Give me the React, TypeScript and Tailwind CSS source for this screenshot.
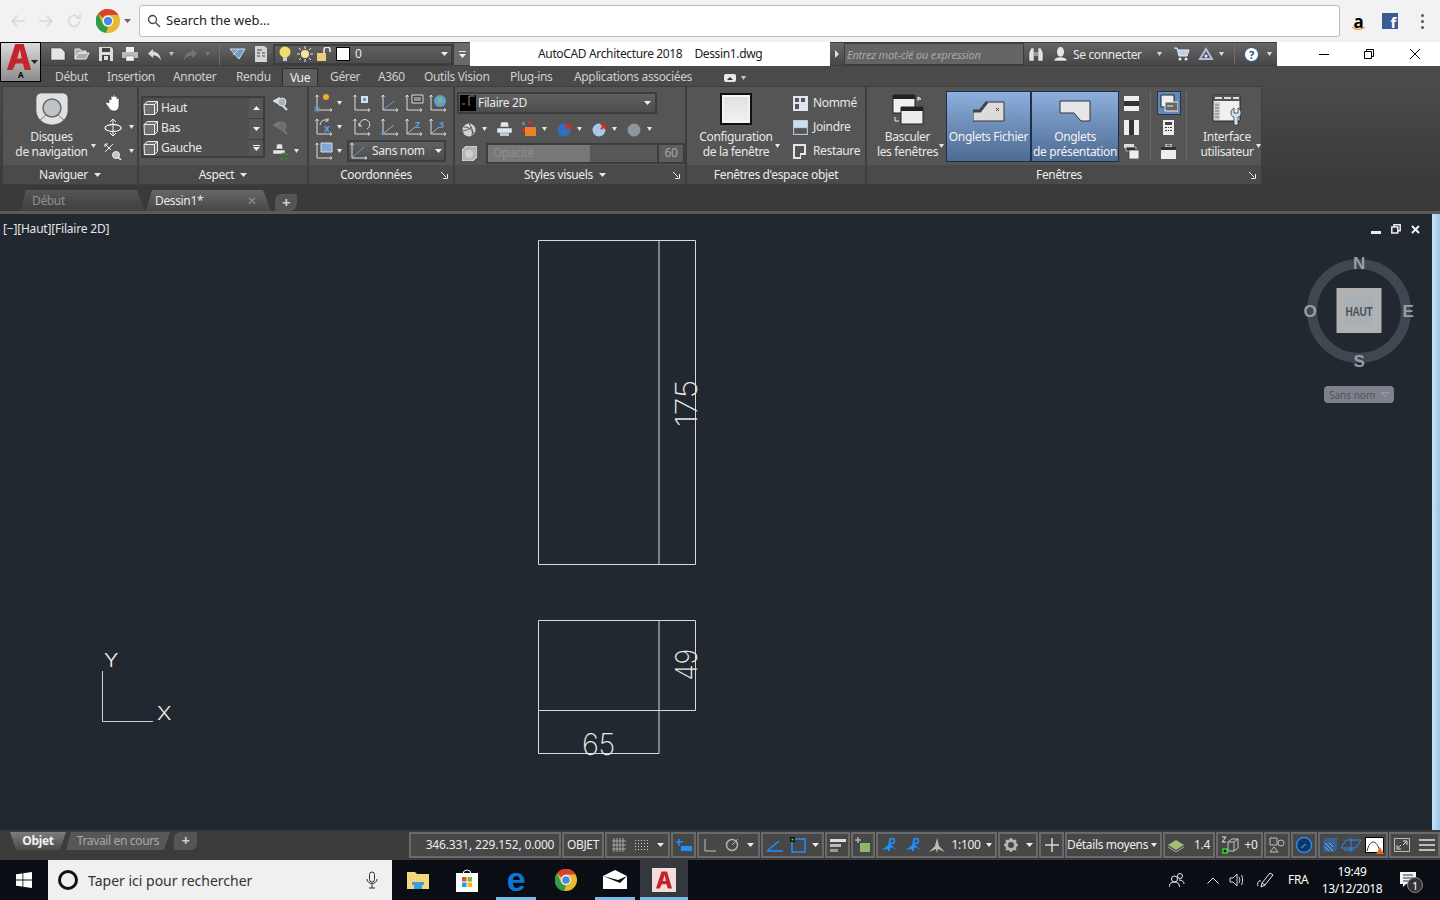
import type { ReactNode } from "react";

const FONT = "font-['Noto_Sans','Liberation_Sans',sans-serif]";

function Caret({ c = "#e6e6e6", w = 7 }: { c?: string; w?: number }) {
  return (
    <svg width={w} height={4} viewBox="0 0 7 4" preserveAspectRatio="none" className="shrink-0">
      <path d="M0 0h7L3.500 4z" fill={c} />
    </svg>
  );
}

function S({ w = 20, h = 20, children }: { w?: number; h?: number; children: ReactNode }) {
  return (
    <svg width={w} height={h} viewBox={`0 0 ${w} ${h}`} className="shrink-0">
      {children}
    </svg>
  );
}

function ChromeLogo({ size = 24 }: { size?: number }) {
  return (
    <svg width={size} height={size} viewBox="0 0 24 24" className="shrink-0">
      <circle cx="12" cy="12" r="12" fill="#e8b92c" />
      <path d="M12 0a12 12 0 0 1 10.400 6H12a6 6 0 0 0-5.200 3L2.200 4.600A12 12 0 0 1 12 0z" fill="#d8412f" />
      <path d="M2.200 4.600 6.800 15a6 6 0 0 0 5.200 3l-2 6A12 12 0 0 1 2.200 4.600z" fill="#2e9c4a" />
      <circle cx="12" cy="12" r="5.400" fill="#fff" />
      <circle cx="12" cy="12" r="4.200" fill="#4a87e8" />
    </svg>
  );
}

function AcadLogo() {
  return (
    <div className="flex h-[40px] w-[41px] flex-col items-center border border-black bg-gradient-to-b from-[#dcdcdc] to-[#8c8c8c]">
      <div className="relative flex h-[27px] w-full justify-start pl-[5px] pt-[1px]">
        <svg width="26" height="26" viewBox="0 0 26 28">
          <path d="M9 0h9l8 28h-7l-1.800-7H9.500L6 28H0zM11 15.500h5L14 6z" fill="#c4242b" fillRule="evenodd" />
        </svg>
        <span className="absolute right-[2px] top-[17px]">
          <Caret c="#222" />
        </span>
      </div>
      <span className="mt-[1px] text-[8px] font-bold leading-[8px] text-black">A</span>
    </div>
  );
}

function Ucs({ children }: { children?: ReactNode }) {
  return (
    <S w={20} h={20}>
      <path d="M3 2v15h15M1.500 4 3 2l1.500 2M16 15.500l2 1.500-2 1.500" fill="none" stroke="#dcdcdc" />
      {children}
    </S>
  );
}

function ViewBox() {
  return (
    <S w={16} h={16}>
      <path d="M1 4.500 4.500 1.500h10v10l-3 3h-10z" fill="#6f6f6f" stroke="#eee" />
      <path d="M1.500 4.500h10v10M11.500 4.500l3-3" fill="none" stroke="#eee" />
    </S>
  );
}

function Combo({ className, children }: { className: string; children: ReactNode }) {
  return (
    <div className={`flex shrink-0 items-center border-2 border-[#3d3d3d] bg-gradient-to-b from-[#606060] to-[#4d4d4d] ${className}`}>
      {children}
    </div>
  );
}

function Panel({ width, title, children, more }: { width: string; title: ReactNode; children: ReactNode; more?: boolean }) {
  return (
    <div className={`flex h-full shrink-0 flex-col border border-[#3e3e3e] ${width}`}>
      <div className="flex h-[78px] bg-[#555555]">{children}</div>
      <div className={`relative flex h-[19px] items-center justify-center gap-[6px] bg-[#4a4a4a] text-[12px] leading-none text-[#ececec] ${more ? "pr-[10px]" : ""}`}>
        {title}
        {more && (
          <svg width="7" height="7" viewBox="0 0 7 7" className="absolute right-[5px] top-[7px]">
            <path d="M0 0 5 5M6.500 2v4.500h-4.500" fill="none" stroke="#e8e8e8" />
          </svg>
        )}
      </div>
    </div>
  );
}

function BrowserBar() {
  return (
    <div className="flex h-[42px] shrink-0 items-center bg-[#f2f2f2]">
      <div className="flex w-[96px] items-center pl-[10px]">
        <svg width="16" height="14" viewBox="0 0 16 14" fill="none" stroke="#d8d8d8" strokeWidth="1.600">
          <path d="M15 7H2M7.500 1.500 2 7l5.500 5.500" />
        </svg>
        <svg width="16" height="14" viewBox="0 0 16 14" fill="none" stroke="#d8d8d8" strokeWidth="1.600" className="ml-[12px]">
          <path d="M1 7h13M8.500 1.500 14 7l-5.500 5.500" />
        </svg>
        <svg width="16" height="16" viewBox="0 0 16 16" fill="none" stroke="#d8d8d8" strokeWidth="1.600" className="ml-[12px]">
          <path d="M13.500 8a5.500 5.500 0 1 1-1.600-3.900M14 1v4h-4" />
        </svg>
      </div>
      <ChromeLogo size={24} />
      <span className="ml-[4px] mr-[8px]">
        <Caret c="#666" />
      </span>
      <div className="flex h-[32px] w-[1201px] items-center rounded-[3px] border border-[#bdbdbd] bg-white pl-[7px] text-[13px] tracking-normal text-[#222]">
        <svg width="14" height="14" viewBox="0 0 14 14" fill="none" stroke="#444" strokeWidth="1.300">
          <circle cx="5.500" cy="5.500" r="4" />
          <path d="m8.500 8.500 4.500 4.500" />
        </svg>
        <span className="ml-[5px]">Search the web...</span>
      </div>
      <div className="relative ml-[10px] flex w-[17px] justify-center text-[17px] font-bold leading-none text-black">
        a
        <svg width="13" height="4" viewBox="0 0 13 4" className="absolute left-[2px] top-[14px]">
          <path d="M0 0c4 3 9 3 13 0" fill="none" stroke="#f09a1a" strokeWidth="1.300" />
        </svg>
      </div>
      <div className="ml-[15px] flex h-[16px] w-[16px] items-end justify-end bg-[#3b5998] pr-[2px] text-[15px] font-bold leading-[14px] text-white">f</div>
      <div className="ml-[23px] flex flex-col gap-[3px]">
        <i className="h-[3px] w-[3px] rounded-full bg-[#555]" />
        <i className="h-[3px] w-[3px] rounded-full bg-[#555]" />
        <i className="h-[3px] w-[3px] rounded-full bg-[#555]" />
      </div>
    </div>
  );
}

function QuickAccess() {
  return (
    <div className="flex h-[24px] w-[429px] items-center border-y border-[#3d3d3d] bg-gradient-to-b from-[#666666] to-[#474747] pl-[5px]">
      <div className="flex w-[24px] justify-center">
        <S w={16} h={14}>
          <path d="M1 1h10l4 4v8H1z" fill="#e4e4e4" stroke="#333" strokeWidth=".5" />
        </S>
      </div>
      <div className="flex w-[24px] justify-center">
        <S w={16} h={14}>
          <path d="M1 12V2h5l1 2h5v2H4l-3 6h11l3-6H4" fill="#a9a9a9" stroke="#eee" />
        </S>
      </div>
      <div className="flex w-[24px] justify-center">
        <S w={14} h={14}>
          <path d="M0 0h12l2 2v12H0z" fill="#ddd" />
          <path d="M3 1h8v4H3zM3 8h8v6H3z" fill="#444" />
          <path d="M5 9h4v4H5z" fill="#ddd" />
        </S>
      </div>
      <div className="flex w-[24px] justify-center">
        <S w={16} h={14}>
          <path d="M4 0h8v5H4z" fill="#eee" />
          <path d="M0 5h16v6H0z" fill="#bbb" />
          <path d="M4 9h8v5H4z" fill="#f4f4f4" stroke="#666" strokeWidth=".5" />
        </S>
      </div>
      <div className="flex w-[24px] justify-center">
        <S w={15} h={13}>
          <path d="M6 1 1 5.500 6 10V7.500c4 0 6 1.500 8 5-.500-5-3-8.500-8-9z" fill="#dcdcdc" />
        </S>
      </div>
      <div className="ml-[1px] flex w-[8px] justify-center">
        <Caret c="#bdbdbd" w={5} />
      </div>
      <div className="ml-[3px] flex w-[24px] justify-center">
        <S w={15} h={13}>
          <path d="M9 1l5 4.500L9 10V7.500c-4 0-6 1.500-8 5 .500-5 3-8.500 8-9z" fill="#757575" />
        </S>
      </div>
      <div className="flex w-[10px] justify-center">
        <Caret c="#7a7a7a" w={5} />
      </div>
      <div className="ml-[7px] h-[22px] w-px bg-[#6e6e6e]" />
      <div className="ml-[7px] flex w-[20px] justify-center">
        <S w={17} h={14}>
          <path d="M1 2h15l-6 10zM4 8l6-6" fill="#6f9bc9" stroke="#ddd" />
        </S>
      </div>
      <div className="ml-[2px] flex w-[24px] justify-center">
        <S w={12} h={16}>
          <path d="M0 0h9l3 2v14H0z" fill="#d4d4d4" />
          <path d="M2 4h5M2 7h3M7 7h3M2 10h3M7 10h3" stroke="#444" />
        </S>
      </div>
      <Combo className="h-[21px] w-[180px]">
        <div className="flex w-[20px] justify-center">
          <S w={12} h={16}>
            <circle cx="6" cy="6" r="5.500" fill="#f2dc6a" />
            <path d="M4 11h4v4H4z" fill="#ccc" />
          </S>
        </div>
        <div className="flex w-[20px] justify-center">
          <S w={16} h={16}>
            <circle cx="8" cy="8" r="4" fill="#f4e8a0" />
            <path d="M8 0v3M8 13v3M0 8h3M13 8h3M2 2l2 2M12 12l2 2M14 2l-2 2M4 12l-2 2" stroke="#e6e6e6" />
          </S>
        </div>
        <div className="flex w-[18px] justify-center">
          <S w={15} h={14}>
            <path d="M0 6h9v8H0z" fill="#e8cf76" />
            <path d="M7 6V3a3 3 0 0 1 6 0v2" fill="none" stroke="#f0f0f0" strokeWidth="1.500" />
          </S>
        </div>
        <div className="ml-[3px] h-[14px] w-[14px] border border-black bg-white" />
        <span className="ml-[5px] flex-1 text-[12px] leading-none text-[#e8e8e8]">0</span>
        <span className="mr-[3px]">
          <Caret c="#f0f0f0" />
        </span>
      </Combo>
      <div className="flex h-[22px] flex-1 flex-col items-center justify-center gap-[2px] border-l border-[#3d3d3d] bg-[#6a6a6a]">
        <i className="h-px w-[7px] bg-[#eee]" />
        <Caret c="#eee" />
      </div>
    </div>
  );
}

function TitleRight() {
  return (
    <div className="flex h-[24px] w-[447px] shrink-0 items-center border-y border-[#3d3d3d] bg-gradient-to-b from-[#666666] to-[#474747]">
      <div className="flex h-full w-[14px] items-center justify-center">
        <svg width="4" height="8" viewBox="0 0 4 8">
          <path d="M0 0l4 4-4 4z" fill="#ddd" />
        </svg>
      </div>
      <div className="flex h-[22px] w-[180px] shrink-0 items-center border border-[#3d3d3d] bg-[#646464] pl-[2px] text-[11px] italic leading-none tracking-[-0.2px] text-[#a8a8a8]">
        Entrez mot-clé ou expression
      </div>
      <div className="ml-[3px] flex w-[18px] justify-center">
        <S w={16} h={15}>
          <path d="M1 6 3 1h3v13H1zM10 1h3l2 5v8h-5z" fill="#e2e2e2" stroke="#444" strokeWidth=".5" />
          <path d="M6 5h4v4H6z" fill="#999" />
        </S>
      </div>
      <div className="ml-[6px] flex w-[18px] justify-center">
        <S w={15} h={15}>
          <ellipse cx="7.500" cy="5" rx="3.500" ry="5" fill="#e6e6e6" />
          <path d="M1 14c0-3 3-4 6.500-4s6.500 1 6.500 4z" fill="#e6e6e6" stroke="#333" strokeWidth=".5" />
        </S>
      </div>
      <span className="ml-[4px] mt-[2px] w-[84px] shrink-0 text-[12px] leading-none text-[#e8e8e8]">Se connecter</span>
      <Caret c="#ddd" w={5} />
      <div className="ml-[10px] flex w-[20px] justify-center">
        <S w={16} h={14}>
          <path d="M0 1h3l2 8h8l2-6H4" fill="#b9d2ea" stroke="#eee" />
          <circle cx="6" cy="12" r="1.500" fill="#eee" />
          <circle cx="12" cy="12" r="1.500" fill="#eee" />
        </S>
      </div>
      <div className="ml-[5px] flex w-[18px] justify-center">
        <S w={16} h={14}>
          <path d="M8 2 14 12H2z" fill="none" stroke="#aebfe0" strokeWidth="2" />
          <circle cx="8" cy="9" r="1.500" fill="#eee" />
        </S>
      </div>
      <span className="ml-[4px]">
        <Caret c="#ddd" w={5} />
      </span>
      <div className="ml-[10px] h-[22px] w-px bg-[#6e6e6e]" />
      <div className="ml-[9px] flex h-[15px] w-[15px] items-center justify-center rounded-full border border-[#2a4f8c] bg-white text-[11px] font-bold leading-none text-[#264f94]">
        ?
      </div>
      <span className="ml-[8px]">
        <Caret c="#ddd" w={5} />
      </span>
    </div>
  );
}

function WindowControls() {
  return (
    <div className="flex h-[24px] flex-1 items-center bg-white pl-[42px]">
      <i className="h-px w-[10px] bg-black" />
      <svg width="10" height="10" viewBox="0 0 10 10" fill="none" stroke="#000" className="ml-[35px]">
        <path d="M.5 2.500h7v7h-7zM2.500 2.500v-2h7v7h-2" />
      </svg>
      <svg width="12" height="12" viewBox="0 0 12 12" fill="none" stroke="#000" className="ml-[35px]">
        <path d="m1 1 10 10M11 1 1 11" />
      </svg>
    </div>
  );
}

function MenuTabs() {
  const tabs: [string, string][] = [
    ["Début", "w-[52px]"],
    ["Insertion", "w-[66px]"],
    ["Annoter", "w-[63px]"],
    ["Rendu", "w-[46px]"],
  ];
  const after: [string, string][] = [
    ["Gérer", "w-[48px]"],
    ["A360", "w-[46px]"],
    ["Outils Vision", "w-[86px]"],
    ["Plug-ins", "w-[64px]"],
    ["Applications associées", "w-[150px]"],
  ];
  return (
    <div className="flex h-[20px] items-end bg-[#4a4a4a] pl-[14px] text-[12px] leading-[18px] text-[#cfcfcf]">
      {tabs.map(([t, w]) => (
        <span key={t} className={`h-[18px] shrink-0 whitespace-nowrap ${w}`}>
          {t}
        </span>
      ))}
      <span className="flex h-[18px] w-[36px] shrink-0 justify-center rounded-t-[2px] border-x border-t border-[#2f2f2f] bg-[#5c5c5c] text-[#f2f2f2]">Vue</span>
      <span className="w-[12px] shrink-0" />
      {after.map(([t, w]) => (
        <span key={t} className={`h-[18px] shrink-0 whitespace-nowrap ${w}`}>
          {t}
        </span>
      ))}
      <div className="mb-[4px] flex h-[8px] w-[12px] items-center justify-center rounded-[2px] bg-[#e8e8e8]">
        <svg width="6" height="3" viewBox="0 0 6 3">
          <path d="M3 0l3 3H0z" fill="#333" />
        </svg>
      </div>
      <span className="mb-[6px] ml-[5px]">
        <Caret c="#ccc" w={5} />
      </span>
    </div>
  );
}

function NaviguerPanel() {
  return (
    <Panel width="w-[136px]" title={<><span>Naviguer</span><Caret /></>}>
      <div className="flex w-[97px] flex-col items-center pt-[6px]">
        <svg width="32" height="32" viewBox="0 0 32 32">
          <path d="M6 0h20c4 0 6 2 6 6v12c0 8-8 14-16 14S0 26 0 18V6c0-4 2-6 6-6z" fill="#dfe1e3" stroke="#333" strokeWidth=".6" />
          <circle cx="16" cy="15" r="9" fill="#bfc3c6" stroke="#6b6b6b" strokeWidth="1.500" />
          <path d="M4 27l6-5M28 27l-6-5" stroke="#777" />
        </svg>
        <span className="relative mt-[4px] text-center text-[12px] leading-[15px] text-[#e8e8e8]">
          Disques
          <br />
          de navigation
          <span className="absolute -right-[8px] top-[15px]">
            <Caret w={5} />
          </span>
        </span>
      </div>
      <div className="flex flex-col pt-[4px]">
        <div className="flex h-[24px] items-center pl-[6px]">
          <S w={16} h={17}>
            <path d="M3 8V5c0-1.500 2-1.500 2 0V2c0-1.500 2-1.500 2 0V1c0-1.300 2-1.300 2 0v1c0-1.500 2-1.500 2 0v2c0-1.300 2-1.300 2 0v6c0 4-2 6-5 6-4 0-4-2-8-7-1-1.500 1-2.500 3-1z" fill="#fff" stroke="#333" strokeWidth=".6" />
          </S>
        </div>
        <div className="flex h-[24px] items-center gap-[7px] pl-[4px]">
          <S w={18} h={17}>
            <path d="M9 0v17M6 3l3-3 3 3M6 14l3 3 3-3" fill="none" stroke="#eee" />
            <ellipse cx="9" cy="9" rx="8" ry="3.500" fill="none" stroke="#eee" strokeWidth="1.300" />
          </S>
          <Caret w={5} />
        </div>
        <div className="flex h-[24px] items-center gap-[7px] pl-[4px]">
          <S w={18} h={17}>
            <path d="M1 1l6 6M9 1 1 9M1 1v3M1 1h3" fill="none" stroke="#eee" />
            <circle cx="12" cy="12" r="3.500" fill="#b7c4d1" stroke="#eee" />
            <path d="m14 14 3 3" stroke="#eee" strokeWidth="1.500" />
          </S>
          <Caret w={5} />
        </div>
      </div>
    </Panel>
  );
}

function AspectPanel() {
  const rows = ["Haut", "Bas", "Gauche"];
  return (
    <Panel width="w-[170px]" title={<><span>Aspect</span><Caret /></>}>
      <div className="ml-[2px] mt-[9px] flex h-[62px] w-[124px] border-2 border-[#3d3d3d]">
        <div className="flex-1 bg-[#4f4f4f]">
          {rows.map((r) => (
            <div key={r} className="flex h-[20px] items-center gap-[2px] text-[12px] leading-none text-[#e8e8e8]">
              <ViewBox />
              <span>{r}</span>
            </div>
          ))}
        </div>
        <div className="flex w-[14px] flex-col gap-[1px] bg-[#3d3d3d]">
          <div className="flex h-[20px] items-center justify-center bg-[#565656]">
            <svg width="7" height="4" viewBox="0 0 7 4">
              <path d="M3.500 0 7 4H0z" fill="#eee" />
            </svg>
          </div>
          <div className="flex h-[20px] items-center justify-center bg-[#565656]">
            <Caret c="#eee" />
          </div>
          <div className="flex flex-1 flex-col items-center justify-center gap-[1px] bg-[#565656]">
            <i className="h-px w-[7px] bg-[#eee]" />
            <Caret c="#eee" />
          </div>
        </div>
      </div>
      <div className="flex flex-col pl-[8px] pt-[4px]">
        <div className="flex h-[24px] items-center">
          <S w={16} h={15}>
            <path d="M7 2 1 5l6 3M3 5h5" fill="none" stroke="#ddd" strokeWidth="2" />
            <path d="M9 9l5 5" stroke="#ddd" strokeWidth="2" />
            <circle cx="9" cy="6" r="4" fill="#9fb2c6" stroke="#ddd" />
          </S>
        </div>
        <div className="flex h-[24px] items-center">
          <S w={16} h={15}>
            <path d="M7 2 1 5l6 3M3 5h5" fill="none" stroke="#777" strokeWidth="2" />
            <path d="M9 9l5 5" stroke="#777" strokeWidth="2" />
            <circle cx="9" cy="6" r="4" fill="#6d6d6d" stroke="#777" />
          </S>
        </div>
        <div className="flex h-[24px] items-center gap-[5px]">
          <S w={16} h={16}>
            <path d="M4 1h5l1 5H3zM0 7h12v4H0z" fill="#e6e6e6" stroke="#444" strokeWidth=".5" />
            <path d="M8 12a3.500 3.500 0 0 1 6 0M14 15a3.500 3.500 0 0 1-6 0" fill="none" stroke="#2fa02f" strokeWidth="1.500" />
          </S>
          <Caret w={5} />
        </div>
      </div>
    </Panel>
  );
}

function CoordPanel() {
  return (
    <Panel width="w-[146px]" more title="Coordonnées">
      <div className="flex flex-col pl-[5px] pt-[4px]">
        <div className="flex h-[24px] items-center">
          <Ucs>
            <circle cx="12" cy="4" r="3" fill="#f0a830" />
            <path d="M1 14h4v4H1z" fill="none" stroke="#5b9be8" />
          </Ucs>
          <span className="ml-[3px] w-[15px]">
            <Caret w={5} />
          </span>
          <div className="flex gap-[4px]">
            <span className="mr-[4px]">
              <Ucs>
                <path d="M9 3h7v7H9z" fill="#ddd" />
                <path d="M11 5h3v3h-3z" fill="#5b9be8" />
              </Ucs>
            </span>
            <Ucs>
              <path d="M4 16 14 8" stroke="#5b9be8" />
            </Ucs>
            <Ucs>
              <path d="M8 2h11v8H8z" fill="#444" stroke="#ddd" />
              <path d="M10 5h7M10 7h7" stroke="#ddd" />
            </Ucs>
            <Ucs>
              <circle cx="12" cy="8" r="6" fill="#5d9fd0" />
              <path d="M9 5l5-1 1 4-3 3z" fill="#7cba6c" />
            </Ucs>
          </div>
        </div>
        <div className="flex h-[24px] items-center">
          <Ucs>
            <path d="M6 8a6 6 0 0 1 8-5M14 1v3h-3" fill="none" stroke="#ddd" />
            <text x="10" y="15" fontSize="10" fontWeight="700" fill="#5b9be8">x</text>
          </Ucs>
          <span className="ml-[3px] w-[15px]">
            <Caret w={5} />
          </span>
          <div className="flex gap-[4px]">
            <span className="mr-[4px]">
              <Ucs>
                <path d="M15 12a5 5 0 1 0-7-3M7 6v3h3" fill="none" stroke="#ddd" />
              </Ucs>
            </span>
            <Ucs>
              <path d="M4 16 14 8" stroke="#aaa" />
              <rect x="1.500" y="15" width="3" height="3" fill="#5b9be8" />
            </Ucs>
            <Ucs>
              <path d="M4 16 11 10" stroke="#aaa" />
              <text x="11" y="11" fontSize="9" fontWeight="700" fill="#5b9be8">Z</text>
            </Ucs>
            <Ucs>
              <path d="M4 16 11 10" stroke="#aaa" />
              <text x="11" y="11" fontSize="9" fontWeight="700" fill="#5b9be8">3</text>
            </Ucs>
          </div>
        </div>
        <div className="flex h-[24px] items-center">
          <Ucs>
            <path d="M7 2h11v9H7z" fill="#7ea6dc" stroke="#ddd" />
          </Ucs>
          <span className="ml-[3px] w-[8px]">
            <Caret w={5} />
          </span>
          <Combo className="ml-[2px] h-[22px] w-[99px]">
            <Ucs>
              <path d="M4 16 15 6" stroke="#5b9be8" />
            </Ucs>
            <span className="ml-[3px] flex-1 text-[12px] leading-none text-[#e8e8e8]">Sans nom</span>
            <span className="mr-[2px]">
              <Caret c="#f0f0f0" />
            </span>
          </Combo>
        </div>
      </div>
    </Panel>
  );
}

function StylesPanel() {
  const Ball = ({ fill, x, wire }: { fill: string; x?: boolean; wire?: boolean }) => (
    <S w={15} h={15}>
      <circle cx="7" cy="8" r="6.500" fill={fill} />
      {wire && <path d="M2 5c4 0 8 2 10 7M7 2c3 3 4 7 3 12M1 9c3-1 6-1 8-4" fill="none" stroke="#333" strokeWidth=".8" />}
      {x && <path d="m9 2 5 5m0-5L9 7" stroke="#e0281c" strokeWidth="2" />}
    </S>
  );
  return (
    <Panel width="w-[232px]" more title={<><span>Styles visuels</span><Caret /></>}>
      <div className="flex flex-col pl-[2px] pt-[5px]">
        <Combo className="h-[22px] w-[200px]">
          <div className="ml-[1px] h-[16px] w-[16px] bg-black">
            <svg width="16" height="16" viewBox="0 0 16 16">
              <path d="M9 1v10M9 1h6M2 9h3" stroke="#ccc" strokeWidth=".7" />
            </svg>
          </div>
          <span className="ml-[2px] flex-1 text-[12px] leading-none text-[#e8e8e8]">Filaire 2D</span>
          <span className="mr-[4px]">
            <Caret c="#f0f0f0" />
          </span>
        </Combo>
        <div className="mt-[3px] flex h-[24px] items-center pl-[5px]">
          <Ball fill="#d4d4d4" wire />
          <span className="ml-[5px] w-[15px]">
            <Caret w={5} />
          </span>
          <S w={15} h={14}>
            <path d="M4 0h7l1 5H3zM0 6h15v5H0z" fill="#e0e6ec" stroke="#555" strokeWidth=".5" />
            <path d="M3 11h9v3H3z" fill="#b7c7d8" />
          </S>
          <span className="w-[9px]" />
          <S w={16} h={16}>
            <path d="M4 6h11v9H4z" fill="#e8832a" />
            <path d="M1 1h3v3H1z" fill="#4b8ad8" />
            <path d="M7 0h3v3H7zM1 8h3v3H1z" fill="#e0281c" />
          </S>
          <span className="ml-[5px] w-[15px]">
            <Caret w={5} />
          </span>
          <Ball fill="#2d6fc4" x />
          <span className="ml-[5px] w-[15px]">
            <Caret w={5} />
          </span>
          <Ball fill="#a9c8e8" x />
          <span className="ml-[5px] w-[15px]">
            <Caret w={5} />
          </span>
          <Ball fill="#8c949c" />
          <span className="ml-[5px]">
            <Caret w={5} />
          </span>
        </div>
        <div className="flex h-[24px] items-center pl-[5px]">
          <S w={15} h={15}>
            <path d="M0 4l4-4h11v11l-4 4H0z" fill="#b5b5b5" stroke="#ddd" />
            <circle cx="7" cy="8" r="4" fill="#d0d0d0" />
          </S>
          <div className="ml-[9px] flex h-[21px] w-[199px] border-2 border-[#3d3d3d] text-[12px] leading-none">
            <div className="flex w-[102px] items-center bg-[#787878] pl-[5px] text-[#8d8d8d]">Opacité</div>
            <div className="flex-1 bg-[#585858]" />
            <div className="flex w-[26px] items-center justify-center border-l-2 border-[#3d3d3d] bg-[#5c5c5c] text-[#a8a8a8]">60</div>
          </div>
        </div>
      </div>
    </Panel>
  );
}

function ViewportPanel() {
  const rows: [string, ReactNode][] = [
    ["Nommé", <path key="a" d="M0 0h15v15H0z M2 2v4h4V2z M8 2v4h4V2z M2 8v5h4V8z" fill="#dfe6ee" fillRule="evenodd" />],
    ["Joindre", <path key="b" d="M0 0h15v15H0z M1 8v6h13V8z" fill="#cfdcea" fillRule="evenodd" stroke="#7aa0c8" strokeWidth=".5" />],
    ["Restaure", <path key="c" d="M0 0h13v11H8v4H0z M2 2v11h5V9h4V2z" fill="#e6e6e6" fillRule="evenodd" />],
  ];
  return (
    <Panel width="w-[180px]" title="Fenêtres d'espace objet">
      <div className="flex w-[98px] flex-col items-center pt-[6px]">
        <div className="h-[32px] w-[32px] border-2 border-[#111] bg-gradient-to-b from-[#dde0e4] to-[#f2f2f2] shadow-[inset_0_0_0_2px_#f4f4f4]" />
        <span className="relative mt-[4px] text-center text-[12px] leading-[15px] text-[#e8e8e8]">
          Configuration
          <br />
          de la fenêtre
          <span className="absolute -right-[7px] top-[15px]">
            <Caret w={5} />
          </span>
        </span>
      </div>
      <div className="flex flex-col pt-[4px]">
        {rows.map(([t, d]) => (
          <div key={t} className="flex h-[24px] items-center gap-[5px] pl-[8px] text-[12px] leading-none text-[#e8e8e8]">
            <S w={15} h={15}>{d}</S>
            <span>{t}</span>
          </div>
        ))}
      </div>
    </Panel>
  );
}

function WindowsPanel() {
  const Blue = ({ width, children, label }: { width: string; children: ReactNode; label: ReactNode }) => (
    <div className={`mt-[4px] flex h-[71px] shrink-0 flex-col items-center border border-[#1f2f48] bg-gradient-to-b from-[#8eb0de] to-[#4d6a92] pt-[8px] text-center text-[12px] leading-[15px] text-[#f2f2f2] ${width}`}>
      {children}
      <span className="mt-[7px] whitespace-nowrap">{label}</span>
    </div>
  );
  return (
    <Panel width="w-[396px]" more title="Fenêtres">
      <div className="flex w-[79px] flex-col items-center pl-[2px] pt-[7px]">
        <S w={32} h={31}>
          <path d="M1 1h22v18H1z" fill="#f0f0f0" stroke="#222" />
          <path d="M1 1h22v4H1z" fill="#222" />
          <path d="M9 13h22v17H9z" fill="#ececec" stroke="#222" />
          <path d="M9 13h22v4H9z" fill="#222" />
          <path d="M26 7V3l3 2h-3M3 23v4h4" fill="none" stroke="#eee" />
        </S>
        <span className="relative mt-[4px] text-center text-[12px] leading-[15px] text-[#e8e8e8]">
          Basculer
          <br />
          les fenêtres
          <span className="absolute -right-[6px] top-[15px]">
            <Caret w={5} />
          </span>
        </span>
      </div>
      <Blue width="w-[85px]" label="Onglets Fichier">
        <S w={32} h={22}>
          <path d="M0 21V11h7l7-9h17v19z" fill="#dcdcdc" stroke="#333" />
          <path d="M0 11h7l7-9" fill="none" stroke="#444" strokeWidth="3" />
          <path d="M23 8l3 3m0-3-3 3" stroke="#444" />
        </S>
      </Blue>
      <Blue width="w-[88px]" label={<>Onglets<br />de présentation</>}>
        <S w={32} h={22}>
          <path d="M1 1h30v20H22l-7-8H1z" fill="#e6e6e6" stroke="#333" />
        </S>
      </Blue>
      <div className="flex w-[31px] flex-col items-start pl-[5px] pt-[4px]">
        <div className="flex h-[24px] items-center">
          <div className="h-[15px] w-[15px] border-y-[5px] border-[#eee] bg-[#333]" />
        </div>
        <div className="flex h-[24px] items-center">
          <div className="h-[15px] w-[15px] border-x-[5px] border-[#eee] bg-[#333]" />
        </div>
        <div className="flex h-[24px] items-center">
          <S w={15} h={15}>
            <path d="M0 0h10v4H0z" fill="#ddd" />
            <path d="M2 3h10v4H2z" fill="#333" stroke="#ddd" strokeWidth=".7" />
            <path d="M5 6h10v9H5z" fill="#eee" stroke="#333" strokeWidth=".7" />
          </S>
        </div>
      </div>
      <div className="mt-[4px] h-[70px] w-px bg-[#6a6a6a]" />
      <div className="flex w-[35px] flex-col items-center pt-[4px]">
        <div className="flex h-[24px] w-[24px] items-center justify-center border border-[#22344f] bg-[#6488b8]">
          <S w={18} h={18}>
            <path d="M1 1h13v12H1z" fill="#eee" stroke="#222" />
            <path d="M5 8h13v9H5z" fill="#666" stroke="#eee" />
            <path d="M7 12h6" stroke="#eee" />
          </S>
        </div>
        <div className="flex h-[24px] items-center">
          <S w={11} h={15}>
            <path d="M0 0h11v15H0z" fill="#eee" />
            <path d="M2 2h7v3H2z" fill="#444" />
            <path d="M2 7h2v1H2zM5 7h1v1H5zM7 7h2v1H7zM2 10h2v1H2zM5 10h1v1H5zM7 10h2v1H7z" fill="#333" />
          </S>
        </div>
        <div className="flex h-[24px] items-center">
          <S w={15} h={15}>
            <path d="M5 0h5v3H5z" fill="none" stroke="#eee" />
            <path d="M0 3h15v12H0z" fill="#eee" />
            <path d="M0 3h15v3H0z" fill="#333" />
          </S>
        </div>
      </div>
      <div className="mt-[4px] h-[70px] w-px bg-[#6a6a6a]" />
      <div className="flex flex-1 flex-col items-center pl-[6px] pt-[7px]">
        <S w={30} h={32}>
          <path d="M1 1h27v26H1z" fill="#f0f0f0" stroke="#222" />
          <path d="M1 1h27v6H1z" fill="#555" />
          <path d="M3 4h7M12 4h7M21 4h6" stroke="#ddd" strokeWidth="2" />
          <path d="M2 8h6v18H2z" fill="#cfcfcf" />
          <path d="M3 11h4M3 14h4M3 17h4M3 20h4M3 23h4" stroke="#777" />
          <path d="M22 14v5h4v-5c2 1 3 3 3 5s-1 4-3 4v8h-4v-8c-2 0-3-2-3-4s1-4 3-5z" fill="#cfe0f0" stroke="#222" strokeWidth=".7" />
        </S>
        <span className="relative mt-[3px] text-center text-[12px] leading-[15px] text-[#e8e8e8]">
          Interface
          <br />
          utilisateur
          <span className="absolute -right-[7px] top-[15px]">
            <Caret w={5} />
          </span>
        </span>
      </div>
    </Panel>
  );
}

function FileTabs() {
  return (
    <div className="flex h-[29px] shrink-0 flex-col bg-[#3a3a3a]">
      <div className="flex h-[26px] items-end pl-[20px] text-[12px] leading-none">
        <div className="flex h-[21px] w-[125px] items-center bg-gradient-to-b from-[#555] to-[#3f3f3f] pl-[12px] text-[#8f8f8f] [clip-path:polygon(0_100%,6px_0,calc(100%-8px)_0,100%_100%)]">Début</div>
        <div className="ml-[1px] flex h-[21px] w-[125px] items-center justify-between bg-gradient-to-b from-[#666] to-[#474747] pl-[9px] pr-[14px] text-[#e8e8e8] [clip-path:polygon(0_100%,6px_0,calc(100%-8px)_0,100%_100%)]">
          <span>Dessin1*</span>
          <span className="text-[#8d8d8d]">✕</span>
        </div>
        <div className="ml-[4px] flex h-[17px] w-[22px] items-center justify-center rounded-tl-[6px] rounded-br-[8px] bg-[#555] text-[15px] font-bold leading-none text-[#cfcfcf]">+</div>
      </div>
      <div className="mt-auto h-[3px] bg-[#5a5a5a]" />
    </div>
  );
}

function Drawing() {
  return (
    <svg width="1432" height="616" viewBox="0 214 1432 616" className="absolute left-0 top-0">
      <g fill="none" stroke="#d8d9da" strokeWidth="1">
        <path d="M538.500 240.500H695.500V564.500H538.500ZM659 240.500V564.500" />
        <path d="M538.500 620.500H695.500V710.500H538.500ZM659 620.500V753.500H538.500V710.500" />
        <path d="M102.500 671V721.500H153" stroke="#d0d0d0" />
      </g>
      <g fill="#e6e7e8" className="font-['Inter','Liberation_Sans',sans-serif]" fontWeight="200">
        <text transform="translate(697 427) rotate(-90)" fontSize="30" textLength="47" lengthAdjust="spacingAndGlyphs">175</text>
        <text transform="translate(697 680.500) rotate(-90)" fontSize="30" textLength="31" lengthAdjust="spacingAndGlyphs">49</text>
        <text x="582" y="755" fontSize="30" textLength="33" lengthAdjust="spacingAndGlyphs">65</text>
        <text x="104" y="667" fontSize="18" fontWeight="300" fill="#eeeeee" textLength="14" lengthAdjust="spacingAndGlyphs">Y</text>
        <text x="157" y="720" fontSize="18" fontWeight="300" fill="#eeeeee" textLength="14" lengthAdjust="spacingAndGlyphs">X</text>
      </g>
    </svg>
  );
}

function ViewCube() {
  return (
    <>
      <svg width="120" height="120" viewBox="0 0 120 120" className="absolute left-[1299px] top-[37px]">
        <circle cx="60" cy="60" r="47" fill="none" stroke="#3f4751" strokeWidth="10" />
        <rect x="37.500" y="37" width="45" height="45" fill="#b0b1b2" />
        <rect x="46" y="46" width="28" height="28" fill="#a9b0b5" />
        <g className="font-['Liberation_Sans',sans-serif]" fontWeight="700" textAnchor="middle">
          <text x="60" y="65" fontSize="13" fill="#4d5156" textLength="27" lengthAdjust="spacingAndGlyphs">HAUT</text>
          <text x="60" y="18" fontSize="17" fill="#9a9ea3">N</text>
          <text x="60" y="116" fontSize="17" fill="#9a9ea3">S</text>
          <text x="109" y="66" fontSize="17" fill="#9a9ea3">E</text>
          <text x="11" y="66" fontSize="17" fill="#9a9ea3">O</text>
        </g>
      </svg>
      <div className="absolute left-[1324px] top-[172px] flex h-[17px] w-[70px] items-center justify-between rounded-[4px] bg-[#7f828c] pl-[5px] pr-[5px] text-[10px] leading-none tracking-normal text-[#50535b]">
        <span>Sans nom</span>
        <svg width="8" height="5" viewBox="0 0 8 5">
          <path d="M.5.500h7L4 4.500z" fill="none" stroke="#9a9da6" />
        </svg>
      </div>
    </>
  );
}

function Canvas() {
  return (
    <div className="flex h-[616px] shrink-0">
      <div className="relative flex-1 overflow-hidden bg-[#212830]">
        <Drawing />
        <span className="absolute left-[3px] top-[7px] text-[12px] leading-[15px] tracking-[-0.2px] text-[#e4e4e4]">[−][Haut][Filaire 2D]</span>
        <div className="absolute right-[12px] top-[10px] flex items-center gap-[10px]">
          <i className="mt-[6px] h-[3px] w-[10px] bg-[#ececec]" />
          <svg width="10" height="10" viewBox="0 0 10 10" fill="none" stroke="#ececec" strokeWidth="1.500">
            <path d="M.8 3h6v6h-6zM3 2.500V.8h6.200v6H7.500" />
          </svg>
          <svg width="9" height="9" viewBox="0 0 9 9" fill="none" stroke="#f2f2f2" strokeWidth="2">
            <path d="m1 1 7 7M8 1 1 8" />
          </svg>
        </div>
        <ViewCube />
      </div>
      <div className="w-[8px] bg-gradient-to-r from-[#c8e2f6] to-[#9cc8ea]" />
    </div>
  );
}

function Group({ width, children }: { width: string; children: ReactNode }) {
  return (
    <div className={`flex h-full shrink-0 items-center justify-center border-2 border-[#6a6a6a] bg-[#474747] ${width}`}>{children}</div>
  );
}

function StatusBar() {
  const blue = "#1f8fff";
  return (
    <div className="flex h-[30px] shrink-0 bg-[#3b3b3b] pt-[2px]">
      <div className="flex h-[18px] w-[409px] shrink-0 pl-[10px] text-[12px] leading-none">
        <div className="flex w-[56px] items-center justify-center bg-gradient-to-b from-[#7d7d7d] to-[#4a4a4a] font-bold text-[#f2f2f2] [clip-path:polygon(0_0,100%_0,calc(100%-6px)_100%,6px_100%)]">Objet</div>
        <div className="flex w-[104px] items-center justify-center bg-[#575757] text-[#a8a8a8] [clip-path:polygon(5px_0,100%_0,calc(100%-6px)_100%,0_100%)]">Travail en cours</div>
        <div className="ml-[4px] flex w-[23px] items-center justify-center rounded-tl-[6px] rounded-br-[6px] bg-[#555] text-[14px] font-bold text-[#d0d0d0]">+</div>
      </div>
      <div className="flex h-[26px] flex-1 gap-[1px] text-[12px] leading-none text-[#ececec]">
        <Group width="w-[152px] pl-[10px] tracking-[-0.15px]">346.331, 229.152, 0.000</Group>
        <Group width="w-[42px]">OBJET</Group>
        <Group width="w-[65px] gap-[6px]">
          <S w={14} h={14}>
            <path d="M2 0v14M5 0v14M8 0v14M11 0v14M0 3h14M0 7h14M0 11h14" stroke="#a8a8a8" />
          </S>
          <span className="ml-[2px] h-[13px] w-[14px] bg-[radial-gradient(#cfcfcf_1px,transparent_1px)] bg-[length:3px_3px]" />
          <span className="ml-[3px]"><Caret c="#eee" /></span>
        </Group>
        <Group width="w-[25px]">
          <S w={18} h={14}>
            <path d="M4 1v7M1 4h7" stroke={blue} strokeWidth="1.500" />
            <rect x="6" y="8" width="11" height="5" fill={blue} />
          </S>
        </Group>
        <Group width="w-[63px] gap-[8px]">
          <S w={14} h={14}>
            <path d="M2 1v12h11" fill="none" stroke="#c4c4c4" />
          </S>
          <S w={14} h={14}>
            <circle cx="7" cy="7" r="5.500" fill="none" stroke="#b0b0b0" strokeWidth="1.500" />
            <path d="M7 7l6-6" stroke="#b0b0b0" />
          </S>
          <Caret c="#eee" />
        </Group>
        <Group width="w-[63px] gap-[6px]">
          <S w={18} h={14}>
            <path d="M1 13 13 3M1 13h16" stroke={blue} strokeWidth="1.500" fill="none" />
          </S>
          <S w={16} h={16}>
            <path d="M2 2h13v13H2z" fill="none" stroke={blue} strokeWidth="1.500" />
            <rect x="0" y="0" width="5" height="5" fill="#111" />
            <rect x="1.500" y="1.500" width="2" height="2" fill="#3ddc3d" />
          </S>
          <Caret c="#eee" />
        </Group>
        <Group width="w-[25px]">
          <div className="flex flex-col gap-[2px]">
            <i className="h-[3px] w-[16px] bg-[#ddd]" />
            <i className="h-[3px] w-[11px] bg-[#bbb]" />
            <i className="h-[3px] w-[8px] bg-[#999]" />
          </div>
        </Group>
        <Group width="w-[24px]">
          <S w={16} h={16}>
            <path d="M3 0v6M0 3h6" stroke="#ddd" />
            <rect x="5" y="6" width="10" height="9" fill="#8fb46e" />
          </S>
        </Group>
        <Group width="w-[121px] gap-[6px]">
          <S w={18} h={16}>
            <circle cx="11" cy="4" r="2.500" fill="none" stroke={blue} strokeWidth="1.500" />
            <path d="M9 1 7 8 1 13l5-1 2 3 2-5 6 3-6-5" fill={blue} />
          </S>
          <S w={18} h={16}>
            <circle cx="11" cy="4" r="2.500" fill="none" stroke={blue} strokeWidth="1.500" />
            <path d="M9 1 7 8 1 13l5-1 2 3 2-5 6 3-6-5" fill={blue} />
          </S>
          <S w={16} h={15}>
            <path d="M8 0 10 8 16 14 9 11 8 15 7 11 0 14 6 8z" fill="#bdbdbd" />
          </S>
          <span className="ml-[1px]">1:100</span>
          <Caret c="#eee" w={6} />
        </Group>
        <Group width="w-[40px] gap-[8px]">
          <S w={14} h={14}>
            <circle cx="7" cy="7" r="4.500" fill="none" stroke="#b5b5b5" strokeWidth="3" />
            <path d="M7 0v2M7 12v2M0 7h2M12 7h2M2 2l1.500 1.500M10.500 10.500 12 12M12 2l-1.500 1.500M3.500 10.500 2 12" stroke="#b5b5b5" strokeWidth="2" />
          </S>
          <Caret c="#eee" />
        </Group>
        <Group width="w-[25px]">
          <S w={14} h={14}>
            <path d="M7 0v14M0 7h14" stroke="#d8d8d8" strokeWidth="1.500" />
          </S>
        </Group>
        <Group width="w-[97px] gap-[3px] pr-[3px]">
          <span className="whitespace-nowrap">Détails moyens</span>
          <Caret c="#eee" w={6} />
        </Group>
        <Group width="w-[52px] gap-[10px]">
          <S w={16} h={14}>
            <path d="M8 2 16 7 8 12 0 7z" fill="#9cc06e" />
            <path d="M0 9l8 5 8-5" fill="none" stroke="#aaa" />
          </S>
          <span>1.4</span>
        </Group>
        <Group width="w-[47px] gap-[5px]">
          <S w={18} h={18}>
            <path d="M2 13h4v4H2z" fill="#111" stroke="#2edc2e" strokeWidth="1.500" />
            <path d="M7 6l4-3h6v9l-4 3H7zM7 6h6v9M13 6l4-3" fill="none" stroke="#c4c4c4" />
            <path d="M1 1h4L1 6h4" fill="none" stroke="#eee" />
          </S>
          <span>+0</span>
        </Group>
        <Group width="w-[26px]">
          <S w={16} h={16}>
            <path d="M1 1h7v7H1z" fill="none" stroke="#bdbdbd" />
            <circle cx="12" cy="6" r="3" fill="none" stroke="#bdbdbd" />
            <path d="M5 10l4 5H1z" fill="none" stroke="#bdbdbd" />
          </S>
        </Group>
        <Group width="w-[26px]">
          <S w={18} h={18}>
            <circle cx="9" cy="9" r="7.500" fill="#14365e" stroke={blue} strokeWidth="1.500" />
            <path d="M6 12l5-4" stroke={blue} strokeWidth="1.500" />
          </S>
        </Group>
        <Group width="w-[70px] gap-[4px]">
          <S w={14} h={15}>
            <path d="M0 3l3-3h11v11l-3 3H0z" fill="#2f6eb0" opacity=".7" />
            <path d="M2 5l8 8M2 9l4 4M6 5l4 4" stroke="#7db2e4" />
          </S>
          <S w={20} h={14}>
            <path d="M5 2h15l-5 8H0z" fill="none" stroke={blue} />
            <path d="M10 0v14M3 12h10" stroke={blue} />
          </S>
          <div className="relative flex h-[16px] w-[19px] items-end justify-center border border-black bg-white">
            <svg width="17" height="14" viewBox="0 0 17 14">
              <path d="M1 13C4 1 10 1 14 13" fill="none" stroke="#333" />
            </svg>
            <svg width="8" height="7" viewBox="0 0 8 7" className="absolute -bottom-[2px] -right-[1px]">
              <path d="M4 0l4 7H0z" fill="#e2681c" />
            </svg>
          </div>
        </Group>
        <Group width="flex-1 gap-[9px]">
          <S w={16} h={14}>
            <path d="M.5.500h15v13H.5z" fill="none" stroke="#bdbdbd" />
            <path d="M4 10l3-3M3 7v4h4M12 4 9 7M13 7V3H9" fill="none" stroke="#ddd" />
          </S>
          <div className="flex flex-col gap-[3px]">
            <i className="h-[2px] w-[16px] bg-[#bdbdbd]" />
            <i className="h-[2px] w-[16px] bg-[#bdbdbd]" />
            <i className="h-[2px] w-[16px] bg-[#bdbdbd]" />
          </div>
        </Group>
      </div>
    </div>
  );
}

function Taskbar() {
  return (
    <div className="flex h-[40px] shrink-0 items-center bg-[#0a0e14] text-white">
      <div className="flex w-[48px] justify-center">
        <svg width="16" height="16" viewBox="0 0 16 16">
          <path d="M0 2.300 6.500 1.400v6.200H0zM7.300 1.300 16 0v7.600H7.300zM0 8.400h6.500v6.200L0 13.700zM7.300 8.400H16V16l-8.700-1.300z" fill="#fff" />
        </svg>
      </div>
      <div className="flex h-full w-[344px] items-center bg-[#f0f0f0] pl-[10px] pr-[14px] text-[14px] tracking-normal text-[#333]">
        <div className="h-[20px] w-[20px] rounded-full border-[3px] border-[#111]" />
        <span className="ml-[10px] flex-1">Taper ici pour rechercher</span>
        <svg width="12" height="18" viewBox="0 0 12 18" fill="none" stroke="#333">
          <rect x="3.500" y="1" width="5" height="10" rx="2.500" />
          <path d="M1 8c0 6 10 6 10 0M6 13v4M3 17h6" />
        </svg>
      </div>
      <div className="flex h-full w-[248px] shrink-0 items-center pl-[1px]">
        <div className="flex h-full w-[49px] items-center justify-center">
          <S w={22} h={18}>
            <path d="M0 1h8l2 2h12v15H0z" fill="#f4d67c" />
            <path d="M5 11h12v3h-2v4H7v-4H5z" fill="#3aa0dc" />
          </S>
        </div>
        <div className="flex h-full w-[49px] items-center justify-center">
          <S w={22} h={24}>
            <path d="M7 6a4 4 0 0 1 8 0" fill="none" stroke="#fff" />
            <path d="M0 5h22v19H0z" fill="#fff" />
            <path d="M6 9h4.500v4.500H6z" fill="#e8502a" />
            <path d="M11.500 9H16v4.500h-4.500z" fill="#7cb82a" />
            <path d="M6 14.500h4.500V19H6z" fill="#1ea0e8" />
            <path d="M11.500 14.500H16V19h-4.500z" fill="#fcb714" />
          </S>
        </div>
        <div className="flex h-full w-[50px] flex-col items-center justify-end">
          <span className="mb-[3px] font-['Liberation_Sans',sans-serif] text-[34px] font-bold leading-[30px] text-[#0a78d7]">e</span>
          <i className="h-[3px] w-[40px] bg-[#76b9ed]" />
        </div>
        <div className="flex h-full w-[49px] items-center justify-center">
          <ChromeLogo size={22} />
        </div>
        <div className="flex h-full w-[49px] flex-col items-center justify-end">
          <div className="mb-[8px]">
            <S w={24} h={19}>
              <path d="M0 6 12 0l12 6v13H0z" fill="#fff" />
              <path d="M0 6l17 7 7-7-9 4z" fill="#0a0e14" />
            </S>
          </div>
          <i className="h-[3px] w-[40px] bg-[#76b9ed]" />
        </div>
      </div>
      <div className="flex h-full w-[48px] shrink-0 flex-col items-center justify-end bg-[#33393f]">
        <div className="mb-[5px] flex h-[24px] w-[24px] items-center justify-center bg-[#f3dcdc]">
          <svg width="16" height="18" viewBox="0 0 26 28">
            <path d="M9 0h9l8 28h-7l-1.800-7H9.500L6 28H0zM11 15.500h5L14 6z" fill="#c4242b" fillRule="evenodd" />
          </svg>
        </div>
        <i className="h-[3px] w-full bg-[#76b9ed]" />
      </div>
      <div className="flex flex-1 items-center pl-[481px] text-[12px]">
        <S w={16} h={16}>
          <circle cx="5.500" cy="7" r="3" fill="none" stroke="#eee" />
          <circle cx="11" cy="4" r="2.500" fill="none" stroke="#eee" />
          <path d="M0 15c0-3 2-5 5.500-5s5 2 5 5M10 8c3 0 5 1.500 5 4" fill="none" stroke="#eee" />
        </S>
        <svg width="12" height="7" viewBox="0 0 12 7" fill="none" stroke="#eee" className="ml-[22px]">
          <path d="m.5 6.500 5.500-5.500 5.500 5.500" />
        </svg>
        <svg width="16" height="14" viewBox="0 0 16 14" fill="none" stroke="#ddd" className="ml-[10px]">
          <path d="M1 5h3l4-4v12L4 9H1zM10 4c1 2 1 4 0 6M12.500 2c1.500 3 1.500 7 0 10" />
        </svg>
        <svg width="18" height="18" viewBox="0 0 18 18" fill="none" stroke="#eee" className="ml-[11px]">
          <path d="M6 12 14 2l3 2-8 10zM6 12l-1 4 4-2M5 10c-3-1-4 3-3 5" />
        </svg>
        <span className="ml-[14px] w-[20px]">FRA</span>
        <div className="ml-[9px] flex w-[70px] flex-col items-center leading-[16px]">
          <span>19:49</span>
          <span className="mt-[1px]">13/12/2018</span>
        </div>
        <div className="relative ml-[13px] h-[16px] w-[16px]">
          <svg width="16" height="16" viewBox="0 0 16 16">
            <path d="M0 0h16v12H6l-3 3v-3H0z" fill="#f4f4f4" />
            <path d="M3 3h10M3 6h10M3 9h6" stroke="#333" />
          </svg>
          <span className="absolute left-[7px] top-[5px] flex h-[16px] w-[16px] items-center justify-center rounded-full border border-[#888] bg-[#333] text-[11px] leading-none">1</span>
        </div>
      </div>
    </div>
  );
}

export default function App() {
  return (
    <div className={`flex h-[900px] w-[1440px] flex-col overflow-hidden bg-[#212830] ${FONT} tracking-[-0.35px]`}>
      <BrowserBar />
      <div className="flex h-[44px] shrink-0 bg-[#4a4a4a]">
        <div className="w-[41px] shrink-0">
          <AcadLogo />
        </div>
        <div className="flex min-w-0 flex-1 flex-col">
          <div className="flex h-[24px]">
            <QuickAccess />
            <div className="flex w-[360px] shrink-0 items-center bg-white pl-[68px] text-[12px] leading-none text-[#222]">
              <span>AutoCAD Architecture 2018</span>
              <span className="ml-[12px]">Dessin1.dwg</span>
            </div>
            <TitleRight />
            <WindowControls />
          </div>
          <MenuTabs />
        </div>
      </div>
      <div className="flex h-[99px] shrink-0 bg-gradient-to-b from-[#4a4a4a] to-[#3a3a3a] pl-[2px]">
        <NaviguerPanel />
        <AspectPanel />
        <CoordPanel />
        <StylesPanel />
        <ViewportPanel />
        <WindowsPanel />
      </div>
      <FileTabs />
      <Canvas />
      <StatusBar />
      <Taskbar />
    </div>
  );
}
